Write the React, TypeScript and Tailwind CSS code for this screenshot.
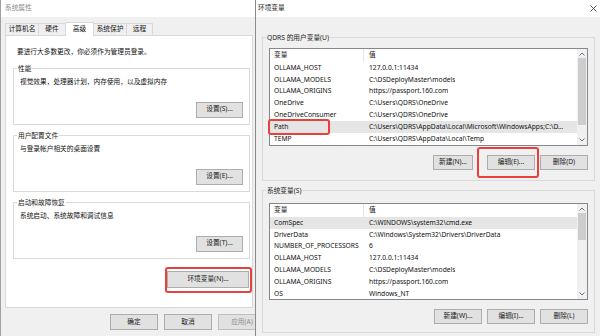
const userVars: [string, string][] = [
  ["OLLAMA_HOST", "127.0.0.1:11434"],
  ["OLLAMA_MODELS", "C:\\DSDeployMaster\\models"],
  ["OLLAMA_ORIGINS", "https://passport.160.com"],
  ["OneDrive", "C:\\Users\\QDRS\\OneDrive"],
  ["OneDriveConsumer", "C:\\Users\\QDRS\\OneDrive"],
  ["Path", "C:\\Users\\QDRS\\AppData\\Local\\Microsoft\\WindowsApps;C:\\D..."],
  ["TEMP", "C:\\Users\\QDRS\\AppData\\Local\\Temp"],
];

const sysVars: [string, string][] = [
  ["ComSpec", "C:\\WINDOWS\\system32\\cmd.exe"],
  ["DriverData", "C:\\Windows\\System32\\Drivers\\DriverData"],
  ["NUMBER_OF_PROCESSORS", "6"],
  ["OLLAMA_HOST", "127.0.0.1:11434"],
  ["OLLAMA_MODELS", "C:\\DSDeployMaster\\models"],
  ["OLLAMA_ORIGINS", "https://passport.160.com"],
  ["OS", "Windows_NT"],
];

const Btn = ({ children, className = "" }: { children: React.ReactNode; className?: string }) => (
  <div
    className={`flex shrink-0 items-center justify-center border border-[#adadad] bg-[#e1e1e1] text-[#1a1a1a] whitespace-nowrap ${className}`}
  >
    {children}
  </div>
);

const Chevron = ({ up }: { up?: boolean }) => (
  <svg width="6" height="4" viewBox="0 0 6 4" className="block">
    <polyline
      points={up ? "0.5,3.5 3,1 5.5,3.5" : "0.5,0.5 3,3 5.5,0.5"}
      fill="none"
      stroke="#606060"
      strokeWidth="0.9"
    />
  </svg>
);

const Group = ({ title, children, className = "" }: { title: string; children: React.ReactNode; className?: string }) => (
  <fieldset className={`min-w-0 border border-[#d9d9d9] ${className}`}>
    <legend className="-ml-[3px] px-[1px] leading-[9px] text-[#1a1a1a]">{title}</legend>
    {children}
  </fieldset>
);

function VarList({
  rows,
  sel,
  height,
  thumb,
  mark,
}: {
  rows: [string, string][];
  sel: string;
  height: string;
  thumb: string;
  mark?: boolean;
}) {
  return (
    <div className={`relative flex border border-[#828790] bg-white ${height}`}>
      <div className="flex min-w-0 flex-1 flex-col overflow-hidden">
        <div className="flex h-[13px] shrink-0 items-center">
          <div className="flex h-full w-[94px] shrink-0 items-center border-r border-[#e5e5e5] pl-[4px]">变量</div>
          <div className="pl-[5px]">值</div>
        </div>
        {rows.map(([n, v]) => (
          <div
            key={n}
            className={`flex h-[11.8px] shrink-0 items-center whitespace-nowrap ${n === sel ? "bg-[#e5e5e5]" : ""}`}
          >
            <div className="w-[94px] shrink-0 pl-[4px]">{n}</div>
            <div className="overflow-hidden pl-[5px]">{v}</div>
          </div>
        ))}
      </div>
      <div className="flex w-[10px] shrink-0 flex-col bg-[#f0f0f0]">
        <div className="flex h-[9px] items-center justify-center">
          <Chevron up />
        </div>
        <div className="flex-1">
          <div className={`mx-auto w-[8px] bg-[#cdcdcd] ${thumb}`} />
        </div>
        <div className="flex h-[10px] items-center justify-center">
          <Chevron />
        </div>
      </div>
      {mark && (
        <div className="absolute -left-[2px] top-[70px] h-[16px] w-[62px] rounded-[3px] border-2 border-[#e8413c]" />
      )}
    </div>
  );
}

function SystemProps() {
  const tabs = ["计算机名", "硬件", "高级", "系统保护", "远程"];
  const widths = ["w-[34px]", "w-[28px]", "w-[29px]", "w-[34px]", "w-[27px]"];
  const groups = [
    { t: "性能", d: "视觉效果，处理器计划，内存使用，以及虚拟内存", b: "设置(S)..." },
    { t: "用户配置文件", d: "与登录帐户相关的桌面设置", b: "设置(E)..." },
    { t: "启动和故障恢复", d: "系统启动、系统故障和调试信息", b: "设置(T)..." },
  ];
  return (
    <div className="flex h-full w-[255px] shrink-0 flex-col overflow-hidden border-l border-[#a0a0a0] bg-[#f0f0f0]">
      <div className="flex h-[17px] shrink-0 items-center bg-white pl-[4px] text-[#8c8c8c]">系统属性</div>
      <div className="flex flex-col pl-[4px] pt-[5px]">
        <div className="flex items-end">
          {tabs.map((t, i) =>
            i === 2 ? (
              <div
                key={t}
                className={`relative z-10 -mb-px -ml-px flex h-[14px] items-center justify-center border border-b-0 border-[#d9d9d9] bg-white ${widths[i]}`}
              >
                {t}
              </div>
            ) : (
              <div
                key={t}
                className={`flex h-[12px] items-center justify-center border border-b-0 border-[#d9d9d9] bg-[#f0f0f0] ${i > 0 ? "-ml-px" : ""} ${widths[i]}`}
              >
                {t}
              </div>
            )
          )}
        </div>
        <div className="flex h-[273px] w-[248px] flex-col border border-[#d9d9d9] bg-white px-[7px] pt-[11px]">
          <div className="pl-[4px] leading-[9px]">要进行大多数更改，你必须作为管理员登录。</div>
          {groups.map((g, i) => (
            <Group key={g.t} title={g.t} className={`mr-[-5px] px-[6px] pb-[6px] ${i === 0 ? "mt-[8px]" : "mt-[6.5px]"}`}>
              <div className="pt-[4px] leading-[9px]">{g.d}</div>
              <div className="mt-[15.5px] flex justify-end">
                <Btn className="h-[16px] w-[47px]">{g.b}</Btn>
              </div>
            </Group>
          ))}
          <div className="mt-[12px] flex justify-end">
            <div className="relative mr-[-4px]">
              <Btn className="h-[17px] w-[82px]">环境变量(N)...</Btn>
              <div className="absolute -bottom-[5px] -left-[2px] -right-[3px] -top-[4px] rounded-[3px] border-2 border-[#e8413c]" />
            </div>
          </div>
        </div>
        <div className="ml-[105px] mt-[6px] flex gap-[6px]">
          <Btn className="h-[16px] w-[48px]">确定</Btn>
          <Btn className="h-[16px] w-[48px]">取消</Btn>
          <Btn className="h-[16px] w-[48px] border-[#bfbfbf] bg-[#cccccc] text-[#8f8f8f]">应用(A)</Btn>
        </div>
      </div>
    </div>
  );
}

function EnvVars() {
  return (
    <div className="flex h-full min-w-0 flex-1 flex-col border-l border-[#8a8a8a] bg-[#f0f0f0]">
      <div className="flex h-[17px] shrink-0 items-center justify-between bg-white pl-[2px] pr-[3px] text-[#1a1a1a]">
        <span>环境变量</span>
        <svg width="7" height="7" viewBox="0 0 7 7">
          <path d="M0.5 0.5 L6.5 6.5 M6.5 0.5 L0.5 6.5" stroke="#333" strokeWidth="0.8" />
        </svg>
      </div>
      <div className="flex flex-col pl-[6px] pr-[5px]">
        <Group title="QDRS 的用户变量(U)" className="mt-[15.5px] px-[6px] pb-[10px]">
          <div className="mt-[6.5px]">
            <VarList rows={userVars} sel="Path" height="h-[98px]" thumb="h-[67px]" mark />
          </div>
          <div className="mt-[9px] flex justify-end">
            <Btn className="h-[15px] w-[40px]">新建(N)...</Btn>
            <div className="relative ml-[14px]">
              <Btn className="h-[15px] w-[48px] border-[1.5px] border-[#0078d7]">编辑(E)...</Btn>
              <div className="absolute -bottom-[8px] -left-[10px] -right-[4px] -top-[8px] rounded-[3px] border-2 border-[#e8413c]" />
            </div>
            <Btn className="ml-[5px] h-[15px] w-[48px]">删除(D)</Btn>
          </div>
        </Group>
        <Group title="系统变量(S)" className="mt-[4.5px] px-[6px] pb-[8px]">
          <div className="mt-[8.5px]">
            <VarList rows={sysVars} sel="ComSpec" height="h-[97px]" thumb="h-[27px]" />
          </div>
          <div className="mt-[9px] flex justify-end gap-[5px]">
            <Btn className="h-[15px] w-[48px]">新建(W)...</Btn>
            <Btn className="h-[15px] w-[48px]">编辑(I)...</Btn>
            <Btn className="h-[15px] w-[48px]">删除(L)</Btn>
          </div>
        </Group>
      </div>
    </div>
  );
}

export default function App() {
  return (
    <div className="flex h-[336px] w-[600px] overflow-hidden bg-[#f0f0f0] font-['Noto_Sans','Noto_Sans_CJK_SC',sans-serif] text-[6.7px] text-[#111]">
      <SystemProps />
      <EnvVars />
    </div>
  );
}
